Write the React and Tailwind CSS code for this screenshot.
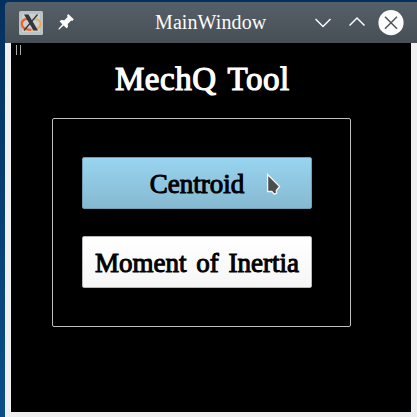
function TitleBar() {
  return (
    <header className="flex h-[41px] shrink-0 items-center rounded-tl-[4px] bg-gradient-to-b from-[#566068] to-[#474f56]">
      <svg className="ml-[14px] h-6 w-6" viewBox="0 0 24 24">
        <rect x="0" y="0" width="24" height="24" rx="1.500" fill="#bcc3c7" />
        <rect x="3" y="3" width="18" height="18" fill="#cbd0d2" />
        <path d="M15 7.800C19 8 21.500 10 21.500 13C21.500 16.500 17 18.800 12 18.800" fill="none" stroke="#f0a850" strokeWidth="1.800" />
        <path d="M12 18.800C6 18.800 2.800 16.500 2.800 13C2.800 10 5 8 8.500 7.800" fill="none" stroke="#f0602a" strokeWidth="2.200" />
        <path d="M5 3.500H9.500L19 19.500H14.500Z" fill="#30363a" />
        <path d="M18.500 3.500L5 19.500" stroke="#30363a" strokeWidth="1.300" />
      </svg>
      <svg className="ml-[15px] h-4 w-4 -translate-y-px" viewBox="0 0 16 16" fill="#fcfcfc">
        <path d="M10.200 0L15.800 5.300L14.200 7L13.200 6.500L9.800 9.900L10 13L8.500 14.300L5.600 11.400L1 15.800L0.200 15L4.400 10.200L1.600 7.400L3 6L6.300 6.200L9.600 2.900L9 1.700Z" />
      </svg>
      <h1 className="ml-[81px] w-[112px] -translate-y-px whitespace-nowrap text-[20px] leading-6 tracking-[0.1px] text-[#fcfcfc]">
        MainWindow
      </h1>
      <svg className="ml-[48px] h-4 w-4" viewBox="0 0 16 16" fill="none" stroke="#fcfcfc" strokeWidth="1.500">
        <path d="M0.500 4L8 11.500L15.500 4" />
      </svg>
      <svg className="ml-[18px] h-4 w-4" viewBox="0 0 16 16" fill="none" stroke="#fcfcfc" strokeWidth="1.500">
        <path d="M0.500 10.500L8 3L15.500 10.500" />
      </svg>
      <svg className="ml-[13px] h-[26px] w-[26px]" viewBox="0 0 26 26">
        <circle cx="13" cy="12.700" r="12.600" fill="#fcfcfc" />
        <path d="M7 6.700L19 18.700M19 6.700L7 18.700" stroke="#4d565d" strokeWidth="1.500" />
      </svg>
    </header>
  );
}

function Cursor() {
  return (
    <svg className="absolute left-[183px] top-[15px] h-[24px] w-[16px]" viewBox="0 0 16 24">
      <path d="M1.600 1.500V18.500H5.800L8.300 21.200L10.600 20.200L10.300 17.500L13.600 13.500Z" fill="#4b4d4f" stroke="#f4f6f7" strokeWidth="1.300" />
    </svg>
  );
}

export default function App() {
  return (
    <div className="h-[417px] w-[417px] overflow-hidden bg-gradient-to-b from-[#04305f] to-[#0c4e8b] pl-[5px] pt-[2px] font-['Liberation_Serif',serif]">
      <div className="flex h-[415px] flex-col">
        <TitleBar />
        <div className="grow bg-[#eff0f1] pb-[5px] pl-[6px] pr-[6px]">
          <main className="flex h-[369px] flex-col bg-black">
            <div className="ml-[5px] mt-[2px] flex h-[10px] gap-[3px]">
              <span className="w-px bg-[#a8a9aa]" />
              <span className="w-px bg-[#a8a9aa]" />
            </div>
            <h2 className="ml-[104px] mt-[4px] h-[40px] whitespace-nowrap text-[33px] leading-[40px] tracking-[0.5px] text-white [-webkit-text-stroke:1.2px_white] [word-spacing:3px]">
              MechQ Tool
            </h2>
            <section className="ml-[41px] mt-[19px] flex h-[209px] w-[299px] flex-col gap-[27px] rounded-[2px] border border-[#bcbebf] pl-[29px] pt-[38px]">
              <button className="relative h-[52px] w-[230px] rounded-[2px] border border-[#719eb2] bg-gradient-to-b from-[#98d4f0] to-[#86b9d1] pt-[2px] text-[27px] text-black [-webkit-text-stroke:1px_black]">
                Centroid
                <Cursor />
              </button>
              <button className="h-[52px] w-[230px] whitespace-nowrap rounded-[2px] border border-[#b5b7b8] bg-gradient-to-b from-white to-[#f6f6f7] pt-[2px] text-[27px] text-black [-webkit-text-stroke:1px_black] [word-spacing:3px]">
                Moment of Inertia
              </button>
            </section>
          </main>
        </div>
      </div>
    </div>
  );
}
